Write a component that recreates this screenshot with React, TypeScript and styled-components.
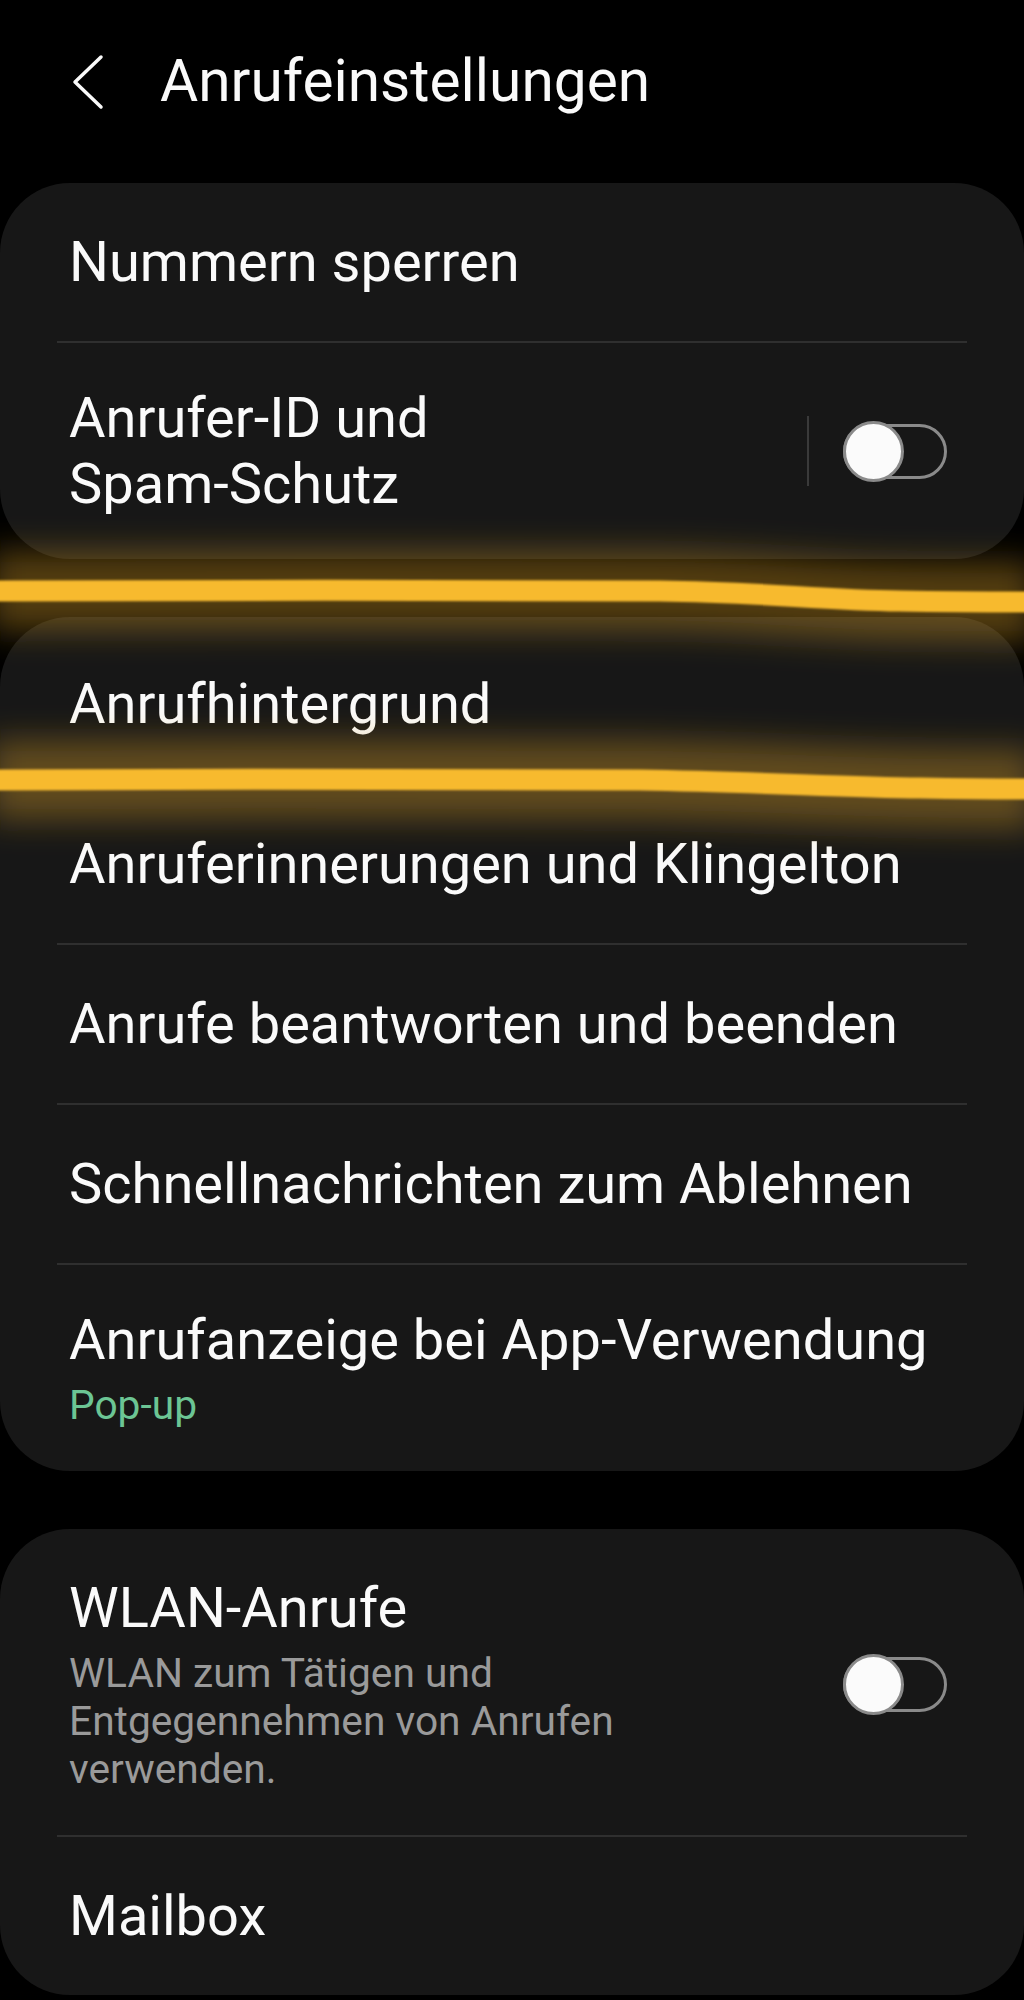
import React from "react";
import styled, { createGlobalStyle } from "styled-components";

const GlobalStyle = createGlobalStyle`
  html, body {
    margin: 0;
    padding: 0;
    background: #000;
  }
  body {
    font-family: Roboto, "Noto Sans", "Liberation Sans", sans-serif;
    -webkit-font-smoothing: antialiased;
  }
  * { box-sizing: border-box; }
`;

const Page = styled.div`
  position: relative;
  width: 1024px;
  min-height: 2000px;
  background: #000;
  overflow: hidden;
`;

const Header = styled.header`
  height: 183px;
  padding: 0 0 20px 72px;
  display: flex;
  align-items: center;
`;

const BackIcon = styled.svg`
  width: 32px;
  height: 56px;
  flex: none;
`;

const Title = styled.h1`
  margin: 0 0 0 56px;
  font-size: 58.6px;
  line-height: 1;
  font-weight: 400;
  color: #fafafa;
  letter-spacing: 0;
`;

const Cards = styled.div`
  display: flex;
  flex-direction: column;
  gap: 58px;
`;

const Card = styled.section<{ $padTop?: number }>`
  background: #171717;
  border-radius: 70px;
  padding-top: ${(p) => p.$padTop ?? 0}px;
  display: flex;
  flex-direction: column;
`;

const Row = styled.div`
  min-height: 158px;
  padding: 42px 77px 42px 69px;
  display: flex;
  align-items: center;
`;

const TextCol = styled.div<{ $max?: number }>`
  flex: 1;
  min-width: 0;
  max-width: ${(p) => (p.$max ? `${p.$max}px` : "none")};
  display: flex;
  flex-direction: column;
  gap: 8px;
`;

const RowTitle = styled.div`
  font-size: 56px;
  line-height: 66px;
  color: #fafafa;
  font-weight: 400;
`;

const SubText = styled.div<{ $accent?: boolean }>`
  font-size: 40.7px;
  line-height: 48px;
  color: ${(p) => (p.$accent ? "#6cc594" : "#9a9a9a")};
`;

const Divider = styled.div`
  height: 2px;
  margin: 0 57px;
  background: #2f2f2f;
`;

const Controls = styled.div`
  margin-left: auto;
  display: flex;
  align-items: center;
`;

const VSeparator = styled.div`
  width: 2px;
  height: 70px;
  background: #3a3a3a;
  margin-right: 34px;
`;

const Track = styled.div`
  position: relative;
  width: 104px;
  height: 55px;
  border: 3px solid #8a8a8a;
  border-radius: 28px;
`;

const Thumb = styled.div`
  position: absolute;
  left: -3px;
  top: -6px;
  width: 61px;
  height: 61px;
  border-radius: 50%;
  background: #fbfbfb;
  border: 3px solid #8a8a8a;
`;

const Overlay = styled.svg`
  position: absolute;
  left: 0;
  top: 0;
  width: 1024px;
  height: 2000px;
  pointer-events: none;
`;

const Toggle = () => (
  <Track>
    <Thumb />
  </Track>
);

const line1 = "M -10 591 C 200 590, 450 590, 660 591 C 760 592, 820 600, 900 601 C 960 602, 1000 602, 1034 602";
const line2 = "M -10 780 C 200 779, 450 779, 640 780 C 760 782, 840 787, 920 788 C 980 789, 1010 789, 1034 789";

export default function App() {
  return (
    <Page>
      <GlobalStyle />
      <Header>
        <BackIcon viewBox="0 0 32 56" fill="none">
          <path d="M29 3 L3 28 L29 53" stroke="#fafafa" strokeWidth="3.5" strokeLinecap="round" strokeLinejoin="round" />
        </BackIcon>
        <Title>Anrufeinstellungen</Title>
      </Header>

      <Cards>
        <Card>
          <Row>
            <TextCol>
              <RowTitle>Nummern sperren</RowTitle>
            </TextCol>
          </Row>
          <Divider />
          <Row>
            <TextCol $max={480}>
              <RowTitle>Anrufer-ID und Spam-Schutz</RowTitle>
            </TextCol>
            <Controls>
              <VSeparator />
              <Toggle />
            </Controls>
          </Row>
        </Card>

        <Card $padTop={8}>
          <Row>
            <TextCol>
              <RowTitle>Anrufhintergrund</RowTitle>
            </TextCol>
          </Row>
          <Divider />
          <Row>
            <TextCol>
              <RowTitle>Anruferinnerungen und Klingelton</RowTitle>
            </TextCol>
          </Row>
          <Divider />
          <Row>
            <TextCol>
              <RowTitle>Anrufe beantworten und beenden</RowTitle>
            </TextCol>
          </Row>
          <Divider />
          <Row>
            <TextCol>
              <RowTitle>Schnellnachrichten zum Ablehnen</RowTitle>
            </TextCol>
          </Row>
          <Divider />
          <Row>
            <TextCol>
              <RowTitle>Anrufanzeige bei App-Verwendung</RowTitle>
              <SubText $accent>Pop-up</SubText>
            </TextCol>
          </Row>
        </Card>

        <Card $padTop={4}>
          <Row>
            <TextCol $max={640}>
              <RowTitle>WLAN-Anrufe</RowTitle>
              <SubText>WLAN zum Tätigen und Entgegennehmen von Anrufen verwenden.</SubText>
            </TextCol>
            <Controls>
              <Toggle />
            </Controls>
          </Row>
          <Divider />
          <Row>
            <TextCol>
              <RowTitle>Mailbox</RowTitle>
            </TextCol>
          </Row>
        </Card>
      </Cards>

      <Overlay viewBox="0 0 1024 2000">
        <defs>
          <filter id="glow" filterUnits="userSpaceOnUse" x="-50" y="0" width="1124" height="2000">
            <feGaussianBlur stdDeviation="16" />
          </filter>
          <filter id="soft" filterUnits="userSpaceOnUse" x="-50" y="0" width="1124" height="2000">
            <feGaussianBlur stdDeviation="1" />
          </filter>
        </defs>
        {[line1, line2].map((d, i) => (
          <g key={i}>
            <path d={d} stroke="#d9a024" strokeOpacity="0.38" strokeWidth="80" fill="none" filter="url(#glow)" />
            <path d={d} stroke="#f7ba2e" strokeWidth="21" fill="none" strokeLinecap="round" filter="url(#soft)" />
          </g>
        ))}
      </Overlay>
    </Page>
  );
}
